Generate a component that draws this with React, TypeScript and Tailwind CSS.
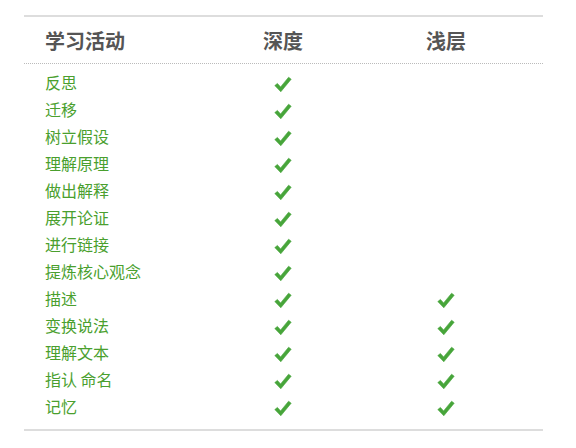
const rows: { name: string; deep: boolean; surface: boolean }[] = [
  { name: "反思", deep: true, surface: false },
  { name: "迁移", deep: true, surface: false },
  { name: "树立假设", deep: true, surface: false },
  { name: "理解原理", deep: true, surface: false },
  { name: "做出解释", deep: true, surface: false },
  { name: "展开论证", deep: true, surface: false },
  { name: "进行链接", deep: true, surface: false },
  { name: "提炼核心观念", deep: true, surface: false },
  { name: "描述", deep: true, surface: true },
  { name: "变换说法", deep: true, surface: true },
  { name: "理解文本", deep: true, surface: true },
  { name: "指认 命名", deep: true, surface: true },
  { name: "记忆", deep: true, surface: true },
];

function Check() {
  return (
    <svg width="18" height="17" viewBox="0 0 18 17" className="block">
      <path
        d="M0.8 9.6 L3.4 7.4 L6.6 10.9 L14.6 1.2 L17.2 3.2 L6.8 15.8 Z"
        fill="#47a53a"
        stroke="#47a53a"
        strokeWidth="0.6"
        strokeLinejoin="round"
      />
    </svg>
  );
}

export default function App() {
  return (
    <div
      className="min-h-screen bg-white pt-[15px] pl-[24px]"
      style={{ fontFamily: '"Noto Sans CJK SC", "Noto Sans", sans-serif' }}
    >
      <div className="w-[519px] border-t-2 border-b-2 border-[#dddddd]">
        {/* header */}
        <div className="grid grid-cols-[178px_162px_164px] h-[47px] items-center border-b border-dotted border-[#bbbbbb] text-[20px] font-bold text-[#555555]">
          <div className="pl-[21px] leading-none pt-[1px]">学习活动</div>
          <div className="text-center leading-none pt-[1px]">深度</div>
          <div className="text-center leading-none pt-[1px]">浅层</div>
        </div>

        {/* rows */}
        <div className="pt-[6px] pb-[8px]">
          {rows.map((r) => (
            <div
              key={r.name}
              className="grid grid-cols-[178px_162px_164px] h-[27px] items-center text-[16px] text-[#4a9f2e]"
            >
              <div className="pl-[21px] leading-none pb-[3px]">{r.name}</div>
              <div className="flex justify-center pt-[1px]">{r.deep && <Check />}</div>
              <div className="flex justify-center pt-[1px]">{r.surface && <Check />}</div>
            </div>
          ))}
        </div>
      </div>
    </div>
  );
}
